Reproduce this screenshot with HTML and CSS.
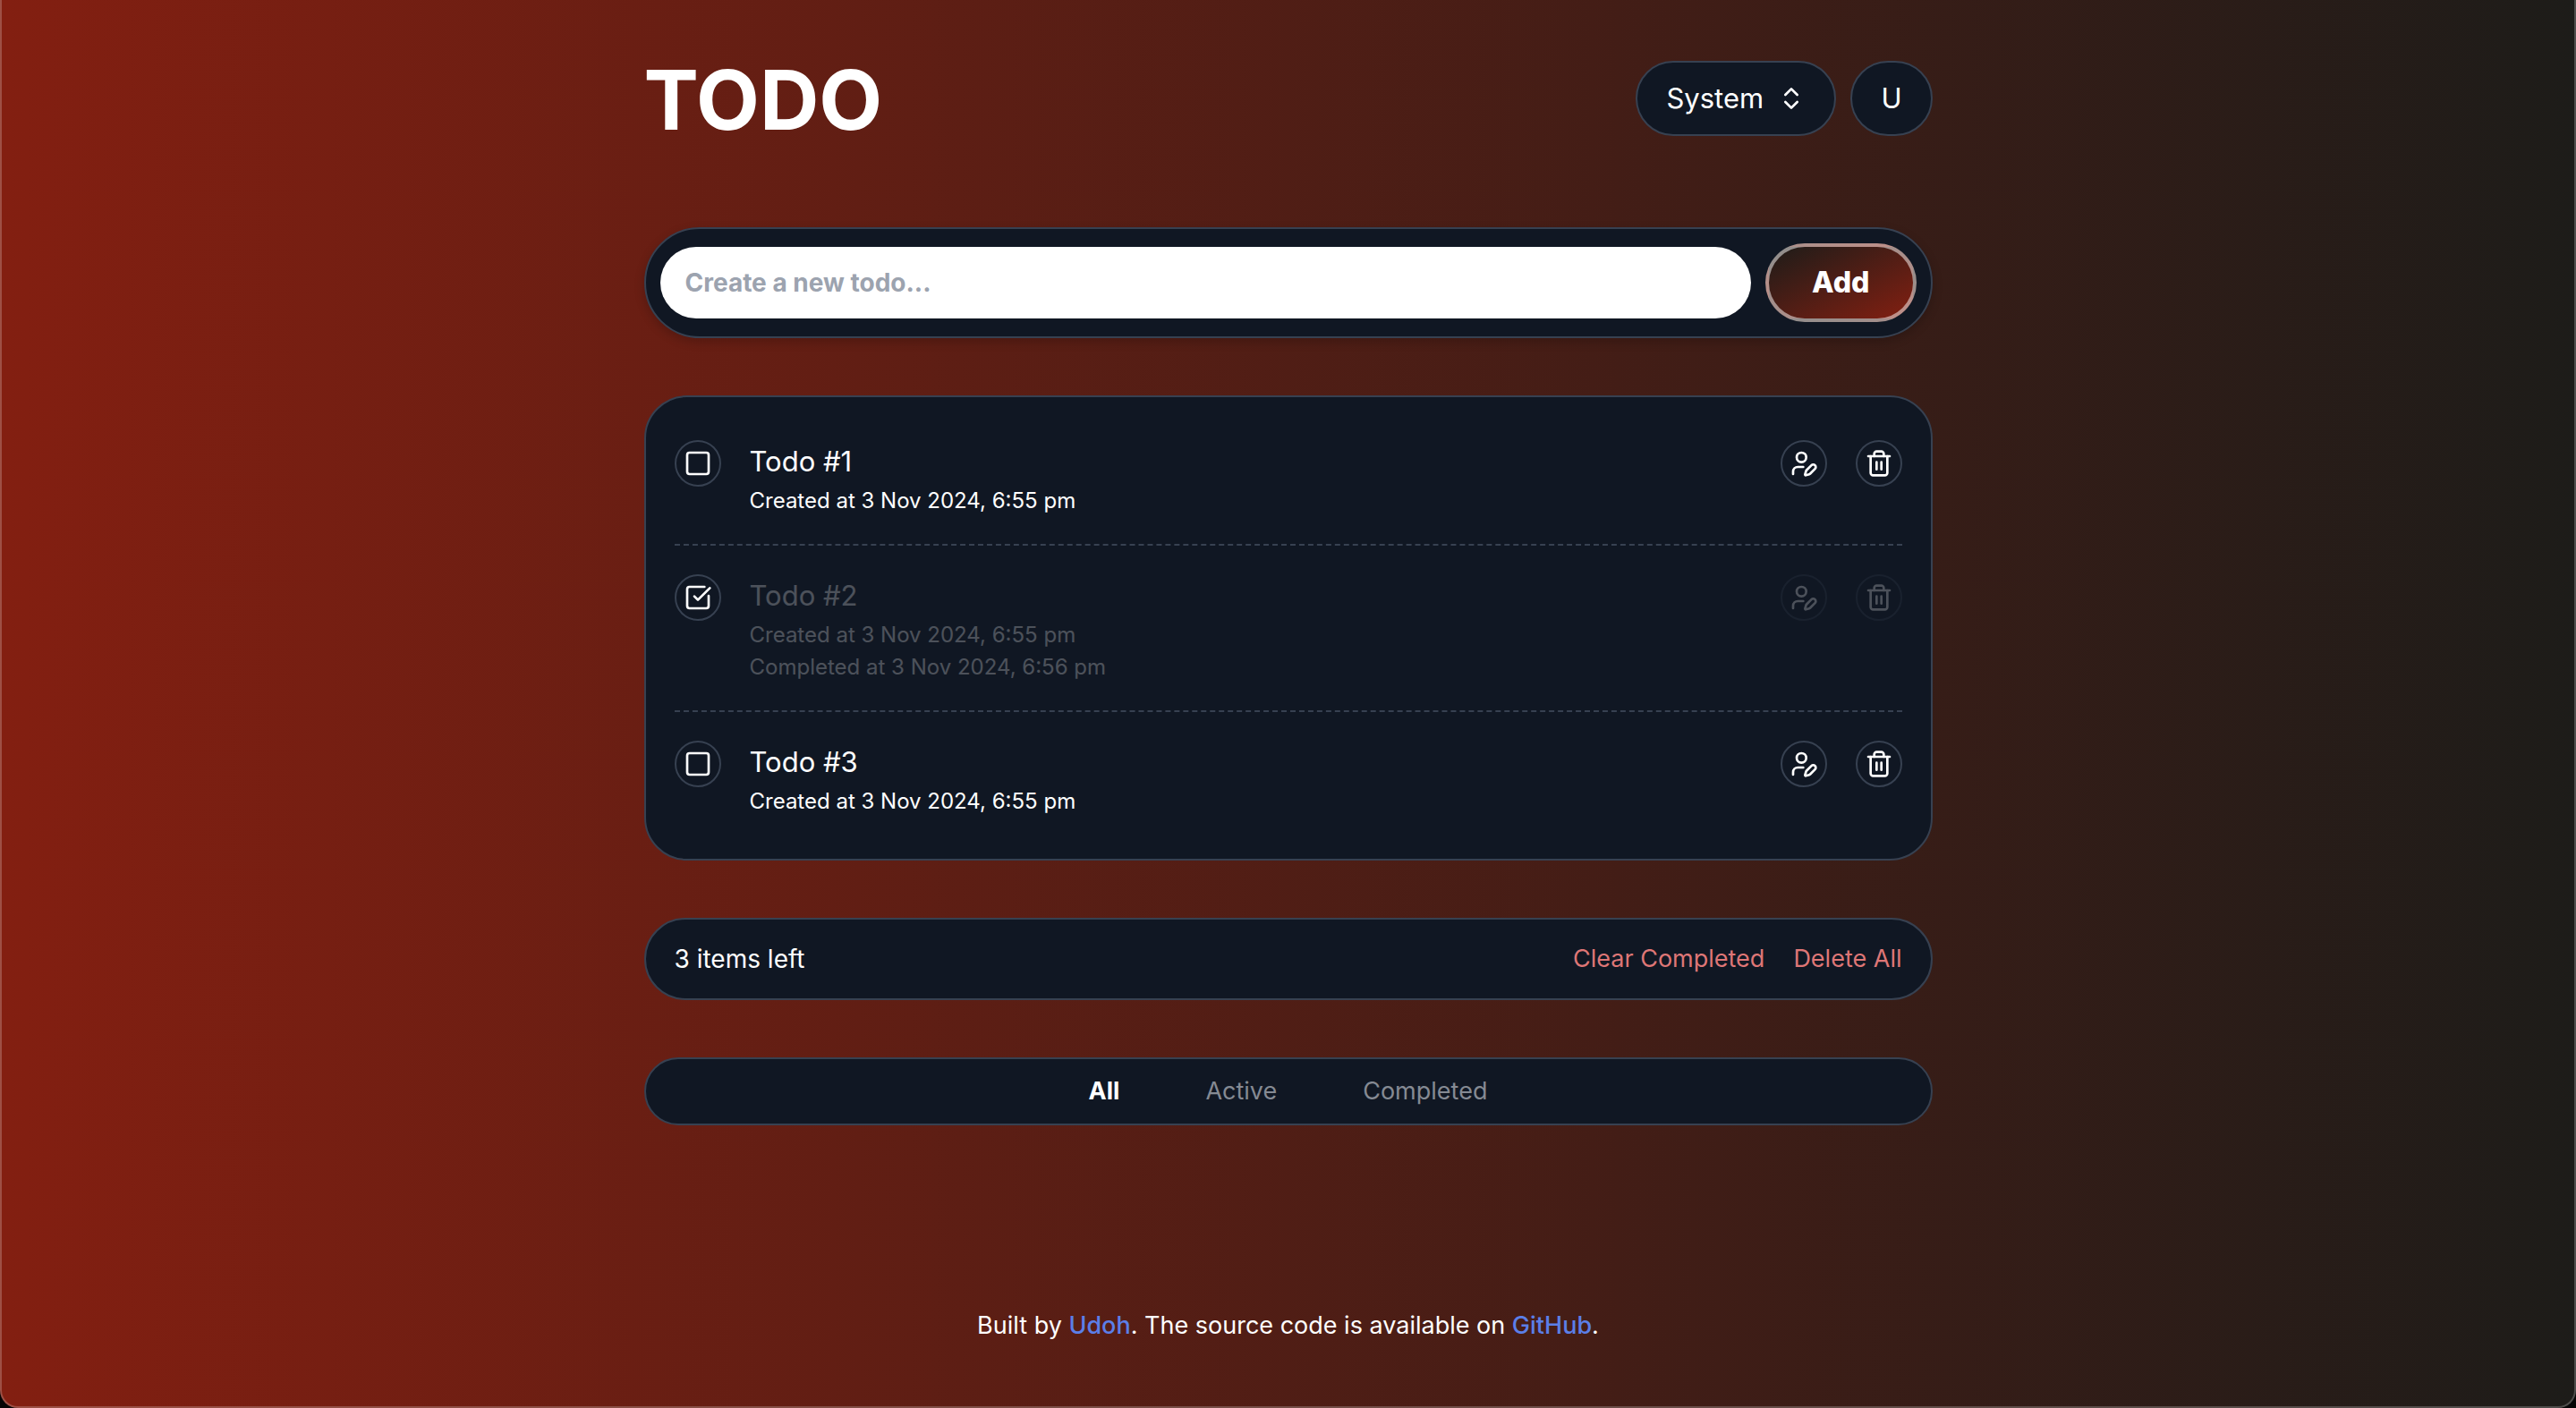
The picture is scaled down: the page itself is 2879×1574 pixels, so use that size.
FILE: index.html
```html
<!DOCTYPE html>
<html lang="en">
<head>
<meta charset="utf-8">
<meta name="viewport" content="width=device-width, initial-scale=1">
<title>Todo</title>
<link rel="stylesheet" href="styles.css">
</head>
<body>
<svg class="sprite" aria-hidden="true">
  <symbol id="icon-sort" viewBox="0 0 24 24"><path d="m7 15 5 5 5-5"/><path d="m7 9 5-5 5 5"/></symbol>
  <symbol id="icon-square" viewBox="0 0 24 24"><rect x="3" y="3" width="18" height="18" rx="2"/></symbol>
  <symbol id="icon-check" viewBox="0 0 24 24"><path d="M21 10.5V19a2 2 0 0 1-2 2H5a2 2 0 0 1-2-2V5a2 2 0 0 1 2-2h12.5"/><path d="m9 11 3 3L22 4"/></symbol>
  <symbol id="icon-edit" viewBox="0 0 24 24"><circle cx="10" cy="7" r="4"/><path d="M11.5 15H7a4 4 0 0 0-4 4v2"/><path d="M21.378 16.626a1 1 0 0 0-3.004-3.004l-4.01 4.012a2 2 0 0 0-.506.854l-.837 2.87a.5.5 0 0 0 .62.62l2.87-.837a2 2 0 0 0 .854-.506z"/></symbol>
  <symbol id="icon-trash" viewBox="0 0 24 24"><path d="M3 6h18"/><path d="M19 6v14c0 1-1 2-2 2H7c-1 0-2-1-2-2V6"/><path d="M8 6V4c0-1 1-2 2-2h4c1 0 2 1 2 2v2"/><path d="M10 11v6"/><path d="M14 11v6"/></symbol>
</svg>
<div class="window">
  <main class="page">
    <header class="header">
      <h1 class="title">TODO</h1>
      <div class="header-actions">
        <div class="theme">
          <select class="theme-select" aria-label="Theme">
            <option>System</option>
            <option>Light</option>
            <option>Dark</option>
          </select>
          <svg class="icon theme-icon"><use href="#icon-sort"/></svg>
        </div>
        <button class="user" type="button">U</button>
      </div>
    </header>

    <form class="panel create">
      <input class="create-input" type="text" placeholder="Create a new todo..." aria-label="New todo">
      <button class="create-button" type="button">Add</button>
    </form>

    <ul class="panel list">
      <li class="todo">
        <label class="round check">
          <input class="check-input" type="checkbox" aria-label="Todo #1">
          <svg class="icon icon-off"><use href="#icon-square"/></svg>
          <svg class="icon icon-on"><use href="#icon-check"/></svg>
        </label>
        <div class="todo-text">
          <h2 class="todo-title">Todo #1</h2>
          <p class="todo-date">Created at 3 Nov 2024, 6:55 pm</p>
        </div>
        <div class="todo-actions">
          <button class="round" type="button" aria-label="Edit"><svg class="icon"><use href="#icon-edit"/></svg></button>
          <button class="round" type="button" aria-label="Delete"><svg class="icon"><use href="#icon-trash"/></svg></button>
        </div>
      </li>
      <li class="todo todo-done">
        <label class="round check">
          <input class="check-input" type="checkbox" aria-label="Todo #2" checked>
          <svg class="icon icon-off"><use href="#icon-square"/></svg>
          <svg class="icon icon-on"><use href="#icon-check"/></svg>
        </label>
        <div class="todo-text">
          <h2 class="todo-title">Todo #2</h2>
          <p class="todo-date">Created at 3 Nov 2024, 6:55 pm</p>
          <p class="todo-date">Completed at 3 Nov 2024, 6:56 pm</p>
        </div>
        <div class="todo-actions">
          <button class="round" type="button" aria-label="Edit"><svg class="icon"><use href="#icon-edit"/></svg></button>
          <button class="round" type="button" aria-label="Delete"><svg class="icon"><use href="#icon-trash"/></svg></button>
        </div>
      </li>
      <li class="todo">
        <label class="round check">
          <input class="check-input" type="checkbox" aria-label="Todo #3">
          <svg class="icon icon-off"><use href="#icon-square"/></svg>
          <svg class="icon icon-on"><use href="#icon-check"/></svg>
        </label>
        <div class="todo-text">
          <h2 class="todo-title">Todo #3</h2>
          <p class="todo-date">Created at 3 Nov 2024, 6:55 pm</p>
        </div>
        <div class="todo-actions">
          <button class="round" type="button" aria-label="Edit"><svg class="icon"><use href="#icon-edit"/></svg></button>
          <button class="round" type="button" aria-label="Delete"><svg class="icon"><use href="#icon-trash"/></svg></button>
        </div>
      </li>
    </ul>

    <section class="panel summary">
      <span>3 items left</span>
      <div class="summary-actions">
        <button class="text-button danger" type="button">Clear Completed</button>
        <button class="text-button danger" type="button">Delete All</button>
      </div>
    </section>

    <nav class="panel filters">
      <button class="text-button filter filter-active" type="button">All</button>
      <button class="text-button filter" type="button">Active</button>
      <button class="text-button filter" type="button">Completed</button>
    </nav>
  </main>

  <footer class="footer">Built by <a class="link" href="#udoh">Udoh</a>. The source code is available on <a class="link" href="#github">GitHub</a>.</footer>
</div>
</body>
</html>
```

FILE: styles.css
```css
*, *::before, *::after { box-sizing: border-box; }

body {
  margin: 0;
  background: #050505;
  color: #fff;
  font-family: Inter, "Liberation Sans", sans-serif;
  font-size: 28px;
  line-height: 40px;
}

h1, h2, p, ul { margin: 0; padding: 0; }

button, input, select { font: inherit; color: inherit; }

button, select { cursor: pointer; }

.sprite { display: none; }

.window {
  display: flex;
  flex-direction: column;
  min-height: 100vh;
  padding: 68px 32px 70px;
  border: 2px solid rgba(255, 255, 255, 0.22);
  border-top: 0;
  border-radius: 0 0 20px 20px;
  background: linear-gradient(to right, #831f11, #1d1c19) border-box;
}

.page {
  display: flex;
  flex-direction: column;
  gap: 64px;
  width: 100%;
  max-width: 1440px;
  margin: 0 auto;
}

.icon {
  width: 32px;
  height: 32px;
  fill: none;
  stroke: currentColor;
  stroke-width: 2;
  stroke-linecap: round;
  stroke-linejoin: round;
}

/* Header */
.header {
  display: flex;
  align-items: center;
  justify-content: space-between;
  margin-bottom: 38px;
}

.title {
  padding-top: 4px;
  font-size: 92px;
  font-weight: 700;
  line-height: 80px;
}

.header-actions { display: flex; gap: 16px; }

.theme { display: grid; align-items: center; }

.theme-select, .theme-icon { grid-area: 1 / 1; }

.theme-icon {
  justify-self: end;
  margin-right: 34px;
  pointer-events: none;
}

.theme-select, .user {
  height: 84px;
  border: 2px solid #374151;
  border-radius: 42px;
  background: #101723;
  font-size: 31px;
}

.theme-select {
  width: 224px;
  padding: 0 32px;
  appearance: none;
}

.user { padding: 0 32px; }

/* Panels */
.panel {
  border: 2px solid #374151;
  border-radius: 62px;
  background: #101723;
}

.create {
  display: flex;
  align-items: center;
  gap: 16px;
  padding: 16px;
  box-shadow: 0 4px 12px rgba(0, 0, 0, 0.2);
}

.create-input {
  flex: 1;
  min-width: 0;
  height: 80px;
  padding: 0 28px;
  border: 0;
  border-radius: 40px;
  background: #fff;
  color: #111827;
  font-weight: 700;
}

.create-input::placeholder { color: #9ca3af; opacity: 1; }

.create-button {
  height: 88px;
  padding: 0 48px;
  border: 4px solid rgba(255, 255, 255, 0.5);
  border-radius: 44px;
  background: linear-gradient(to bottom right, #1d1c19, #831f11);
  font-size: 32px;
  font-weight: 800;
}

.list {
  padding: 16px 32px;
  border-radius: 48px;
  list-style: none;
}

.todo {
  display: flex;
  gap: 32px;
  padding: 32px 0;
}

.todo:not(:last-child) { border-bottom: 2px dashed #374151; }

.todo-text {
  display: flex;
  flex: 1;
  flex-direction: column;
  gap: 4px;
}

.todo-title {
  font-size: 31px;
  font-weight: 400;
  line-height: 48px;
}

.todo-date {
  font-size: 24px;
  line-height: 32px;
}

.todo-actions { display: flex; gap: 32px; }

.round {
  display: grid;
  place-items: center;
  width: 52px;
  height: 52px;
  padding: 0;
  border: 2px solid #374151;
  border-radius: 50%;
  background: none;
}

.check { cursor: pointer; }

.check > * { grid-area: 1 / 1; }

.check-input {
  width: 48px;
  height: 48px;
  margin: 0;
  border-radius: 50%;
  appearance: none;
}

.check .icon { pointer-events: none; }

.check-input:checked ~ .icon-off,
.check-input:not(:checked) ~ .icon-on { display: none; }

.todo-done .todo-text, .todo-done .todo-actions { opacity: 0.25; }

/* Summary and filters */
.summary {
  display: flex;
  align-items: center;
  justify-content: space-between;
  padding: 24px 32px;
  border-radius: 46px;
}

.summary-actions { display: flex; gap: 32px; }

.text-button {
  padding: 0;
  border: 0;
  background: none;
  font-size: 27px;
}

.danger { color: #de7676; }

.filters {
  display: flex;
  justify-content: center;
  gap: 96px;
  padding: 16px 32px;
  border-radius: 38px;
}

.filter { color: #858a93; }

.filter-active { color: #fff; font-weight: 700; }

/* Footer */
.footer {
  margin-top: auto;
  font-size: 27px;
  text-align: center;
}

.link {
  color: #5b7fe8;
  font-weight: 500;
  text-decoration: none;
}
```
